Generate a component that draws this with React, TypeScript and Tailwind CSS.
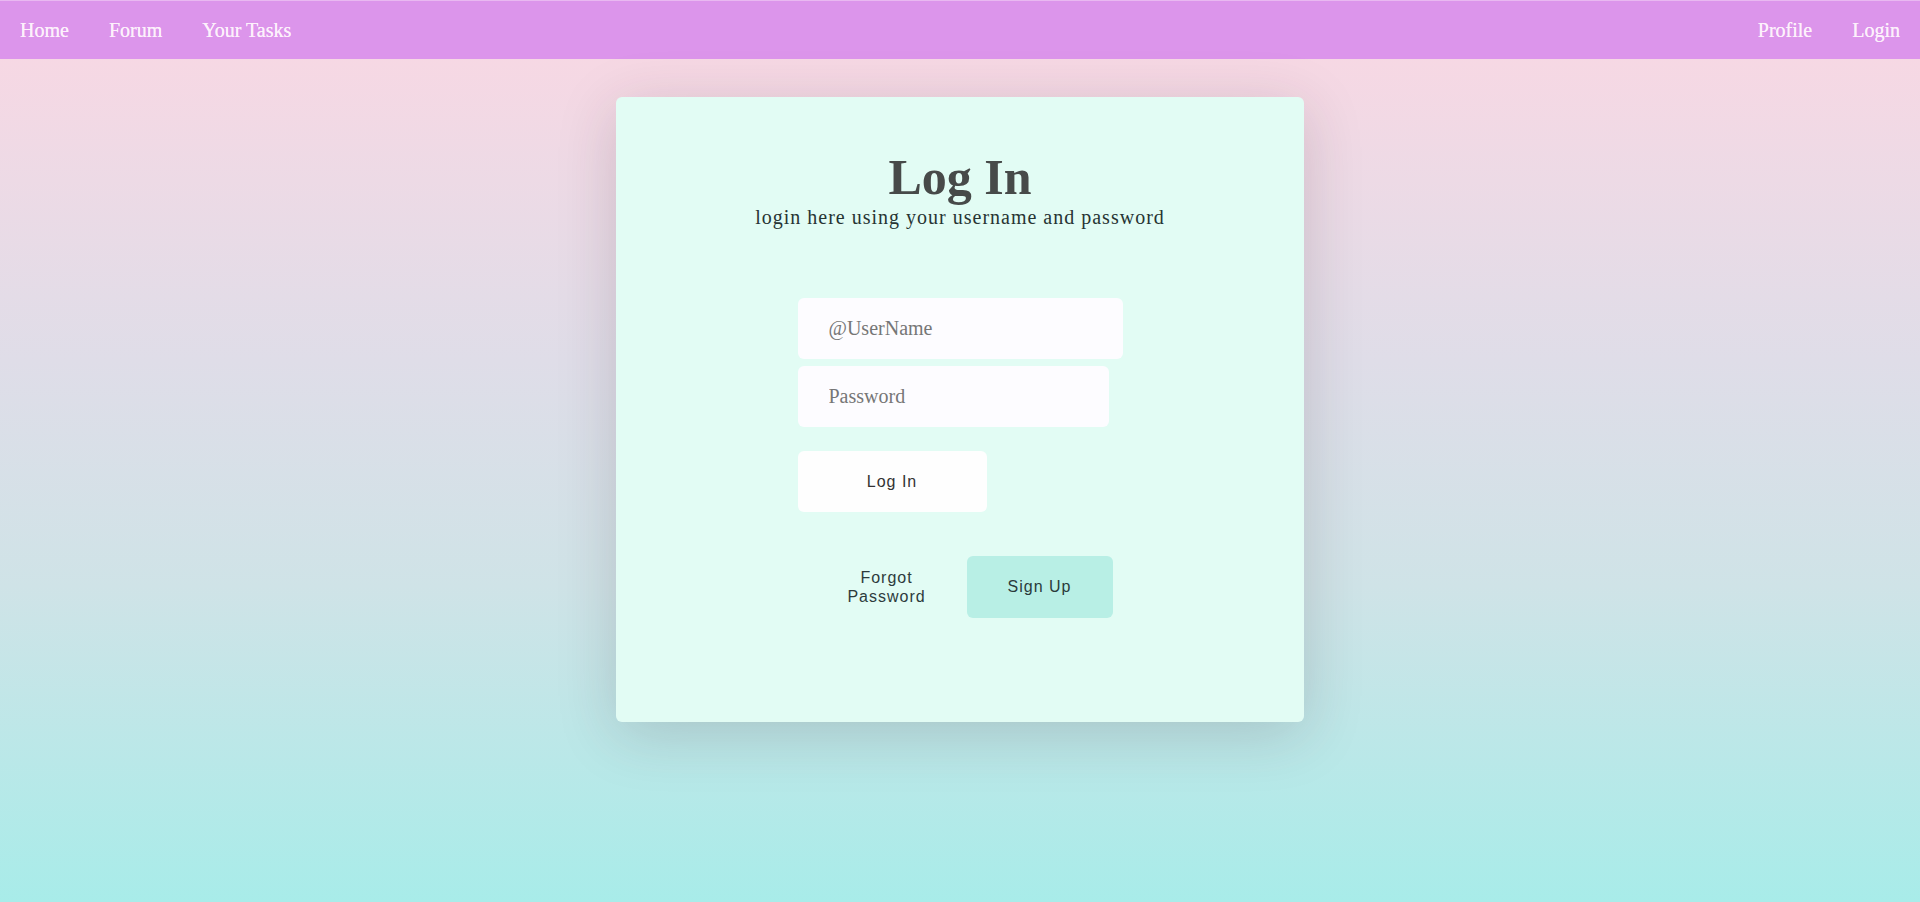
import React from 'react';

const serif = "font-['Liberation_Serif','Times_New_Roman',serif]";
const sans = "font-['Liberation_Sans',Arial,sans-serif]";

const NavLink = ({ label }: { label: string }) => (
  <a
    href="#"
    className={`px-5 text-[20px] leading-[24px] text-[#fdf1fc] [text-shadow:0_0_0.4px_#fdf1fc] ${serif}`}>
    {label}
  </a>
);

export default function App() {
  return (
    <div className="min-h-[902px] w-full bg-[linear-gradient(to_bottom,#fbd7e3_0%,#dfdde8_40%,#cfe3e7_65%,#a8ece9_100%)]">
      {/* top nav */}
      <nav className="flex h-[59px] items-center justify-between border-t border-[#e9b8f1] bg-[#dc95eb]">
        <div className="flex items-center">
          <NavLink label="Home" />
          <NavLink label="Forum" />
          <NavLink label="Your Tasks" />
        </div>
        <div className="flex items-center">
          <NavLink label="Profile" />
          <NavLink label="Login" />
        </div>
      </nav>

      <div className="flex justify-center pt-[38px]">
        <div className="flex h-[625px] w-[688px] flex-col items-center rounded-[6px] bg-[#e2fcf4] pt-[52px] shadow-[0_12px_60px_rgba(60,40,50,0.18)]">
          <h1 className={`text-[50px] font-bold leading-[56px] text-[#474a49] ${serif}`}>Log In</h1>
          <p className={`text-[20px] leading-[24px] tracking-[1px] text-[#273433] ${serif}`}>
            login here using your username and password
          </p>

          <form className="mt-[69px] flex w-[325px] flex-col items-start" onSubmit={e => e.preventDefault()}>
            <input
              type="text"
              placeholder="@UserName"
              className={`h-[61px] w-[325px] rounded-[6px] bg-[#fdfcff] px-[31px] text-[20px] text-[#444] outline-none placeholder:text-[#767676] ${serif}`}
            />
            <input
              type="password"
              placeholder="Password"
              className={`mt-[7px] h-[61px] w-[311px] rounded-[6px] bg-[#fdfcff] px-[31px] text-[20px] text-[#444] outline-none placeholder:text-[#767676] ${serif}`}
            />
            <button
              type="submit"
              className={`mt-[24px] h-[61px] w-[189px] rounded-[6px] bg-[#fefefe] text-[16px] tracking-[1px] text-[#333] ${sans}`}>
              Log In
            </button>

            <div className="mt-[44px] flex items-center">
              <button
                type="button"
                className={`ml-[19px] w-[140px] px-5 text-[16px] leading-[19px] tracking-[1px] text-[#2d3b3c] ${sans}`}>
                Forgot Password
              </button>
              <button
                type="button"
                className={`ml-[10px] h-[62px] w-[146px] rounded-[6px] bg-[#b8efe5] text-[16px] tracking-[1px] text-[#2a3b3b] ${sans}`}>
                Sign Up
              </button>
            </div>
          </form>
        </div>
      </div>
    </div>
  );
}
